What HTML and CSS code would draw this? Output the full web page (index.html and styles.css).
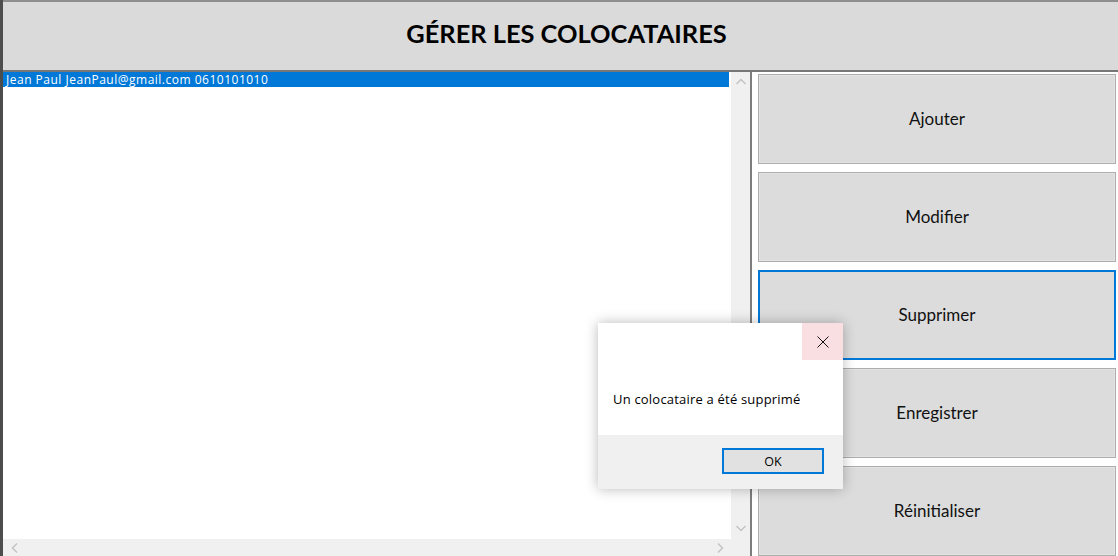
FILE: index.html
```html
<!DOCTYPE html>
<html lang="fr">
<head>
<meta charset="utf-8">
<title>Gérer les colocataires</title>
<link rel="stylesheet" href="styles.css">
</head>
<body>
<div class="app">
  <header class="header">
    <h1 class="title">GÉRER LES COLOCATAIRES</h1>
  </header>
  <div class="main">
    <div class="listbox">
      <div class="list">
        <div class="item selected">Jean Paul JeanPaul@gmail.com 0610101010</div>
      </div>
      <div class="vscroll">
        <svg class="arrow" width="12" height="8" viewBox="0 0 12 8"><path d="M1.5 6 L6 1.5 L10.5 6" fill="none" stroke="#c2c2c2" stroke-width="1.4"/></svg>
        <svg class="arrow" width="12" height="8" viewBox="0 0 12 8"><path d="M1.5 2 L6 6.5 L10.5 2" fill="none" stroke="#c2c2c2" stroke-width="1.4"/></svg>
      </div>
      <div class="hscroll">
        <svg class="arrow" width="8" height="12" viewBox="0 0 8 12"><path d="M6 1.5 L1.5 6 L6 10.5" fill="none" stroke="#c2c2c2" stroke-width="1.4"/></svg>
        <svg class="arrow" width="8" height="12" viewBox="0 0 8 12"><path d="M2 1.5 L6.5 6 L2 10.5" fill="none" stroke="#c2c2c2" stroke-width="1.4"/></svg>
      </div>
      <div class="corner"></div>
    </div>
    <div class="buttons">
      <button class="btn">Ajouter</button>
      <button class="btn">Modifier</button>
      <button class="btn focused">Supprimer</button>
      <button class="btn">Enregistrer</button>
      <button class="btn">Réinitialiser</button>
    </div>
  </div>

  <div class="dialog">
    <div class="dialog-top">
      <div class="close">
        <svg width="12" height="12" viewBox="0 0 12 12"><path d="M0.5 0.5 L11.5 11.5 M11.5 0.5 L0.5 11.5" stroke="#111" stroke-width="1"/></svg>
      </div>
      <p class="message">Un colocataire a été supprimé</p>
    </div>
    <div class="dialog-bottom">
      <button class="ok">OK</button>
    </div>
  </div>
</div>
</body>
</html>
```

FILE: styles.css
```css
* { box-sizing: border-box; }

html, body {
  margin: 0;
  padding: 0;
  background: #ffffff;
}

body {
  width: 1118px;
  height: 556px;
  overflow: hidden;
  font-family: Lato, "Open Sans", "Liberation Sans", sans-serif;
  color: #000;
}

.app {
  position: relative;
  width: 1118px;
  height: 556px;
  display: flex;
  flex-direction: column;
  border-left: 3px solid #4d4d4d;
}

.header {
  height: 72px;
  flex: none;
  background: #dadada;
  border-top: 2px solid #8e8e8e;
  border-bottom: 2px solid #777777;
  display: flex;
  align-items: center;
  justify-content: center;
  padding-left: 12px;
}

.title {
  margin: 0 0 7px 0;
  font-family: Lato, "Open Sans", sans-serif;
  font-weight: 700;
  font-size: 25.4px;
  color: #000;
}

.main {
  flex: 1;
  display: flex;
  min-height: 0;
}

.listbox {
  width: 749px;
  flex: none;
  display: grid;
  grid-template-columns: 1fr 19px;
  grid-template-rows: 1fr 17px;
  border-right: 2px solid #7d7d7d;
  background: #fff;
}

.list {
  padding: 0 2px 0 0;
  background: #fff;
  overflow: hidden;
}

.item {
  height: 15px;
  line-height: 15px;
  font-family: "Open Sans", "Noto Sans", sans-serif;
  font-size: 12px;
  letter-spacing: 0.5px;
  padding-left: 3px;
  white-space: nowrap;
}

.item.selected {
  background: #0078d7;
  color: #fff;
}

.vscroll {
  background: #f0f0f0;
  display: flex;
  flex-direction: column;
  justify-content: space-between;
  align-items: center;
  padding: 6px 0 7px 0;
}

.hscroll {
  background: #f0f0f0;
  display: flex;
  justify-content: space-between;
  align-items: center;
  padding: 0 7px 0 8px;
}

.corner {
  background: #f0f0f0;
}

.arrow { display: block; }

.buttons {
  flex: 1;
  display: flex;
  flex-direction: column;
  gap: 8px;
  padding: 2px 0 0 6px;
}

.btn {
  width: 358px;
  height: 90px;
  flex: none;
  background: #dcdcdc;
  border: 1px solid #adadad;
  box-shadow: inset 0 0 0 1px #e3e3e3;
  font-family: Lato, "Open Sans", sans-serif;
  font-size: 17px;
  color: #111;
  padding: 0 0 2px 0;
}

.btn.focused {
  border: 2px solid #0078d7;
  box-shadow: none;
}

.dialog {
  position: absolute;
  left: 595px;
  top: 323px;
  width: 245px;
  height: 166px;
  background: #fff;
  box-shadow: 0 0 12px rgba(0,0,0,0.28);
  display: flex;
  flex-direction: column;
}

.dialog-top {
  position: relative;
  flex: 1;
  background: #fff;
}

.close {
  position: absolute;
  right: 0;
  top: 0;
  width: 41px;
  height: 37px;
  background: #fadfe2;
  display: flex;
  align-items: center;
  justify-content: center;
}

.message {
  margin: 0;
  padding: 67px 0 0 15px;
  font-family: "Open Sans", "Noto Sans", sans-serif;
  font-size: 13px;
  letter-spacing: 0.2px;
  color: #000;
}

.dialog-bottom {
  height: 54px;
  background: #f0f0f0;
  display: flex;
  justify-content: flex-end;
  align-items: flex-start;
  padding: 13px 19px 0 0;
}

.ok {
  width: 102px;
  height: 26px;
  border: 2px solid #0078d7;
  background: #e1e1e1;
  font-family: "Open Sans", "Noto Sans", sans-serif;
  font-size: 12.5px;
  color: #000;
  padding: 0;
}
```
